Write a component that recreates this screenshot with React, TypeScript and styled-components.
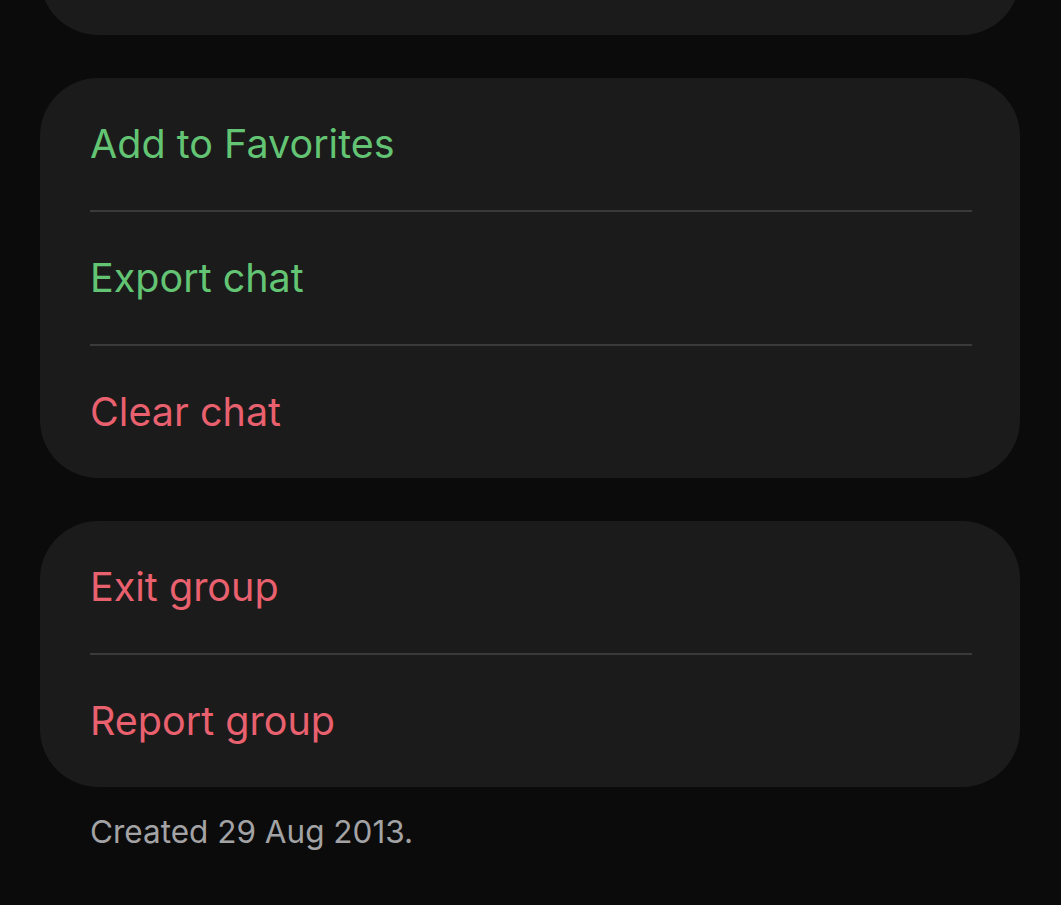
import React from 'react';
import styled, {createGlobalStyle} from "styled-components";

const GlobalStyle = createGlobalStyle`
  html, body {
    margin: 0;
    padding: 0;
    background: #0b0b0b;
  }
  body {
    font-family: Inter, "Liberation Sans", sans-serif;
    -webkit-font-smoothing: antialiased;
  }
`

type Item = { label: string, tone: "green" | "red" }

const groups: Item[][] = [
    [
        {label: "Add to Favorites", tone: "green"},
        {label: "Export chat", tone: "green"},
        {label: "Clear chat", tone: "red"},
    ],
    [
        {label: "Exit group", tone: "red"},
        {label: "Report group", tone: "red"},
    ],
]

export default function App() {
    return (
        <>
            <GlobalStyle/>
            <Page>
                <PeekCard/>
                {groups.map((group, gi) => (
                    <Card key={gi}>
                        {group.map((item, index) => (
                            <React.Fragment key={item.label}>
                                {index > 0 && <Divider/>}
                                <Row tone={item.tone}>{item.label}</Row>
                            </React.Fragment>
                        ))}
                    </Card>
                ))}
                <Footer>Created 29 Aug 2013.</Footer>
            </Page>
        </>
    );
}

const Page = styled.div`
  display: flex;
  flex-direction: column;
  gap: 43px;
  padding: 0 41px 0 40px;
  height: 905px;
  overflow: hidden;
  box-sizing: border-box;
`
const Card = styled.div`
  display: flex;
  flex-direction: column;
  background: #1b1b1b;
  border-radius: 58px;
`
const PeekCard = styled(Card)`
  height: 120px;
  margin-top: -85px;
  flex-shrink: 0;
`
const Row = styled.div<{ tone: "green" | "red" }>`
  height: 132px;
  display: flex;
  align-items: center;
  padding-left: 50px;
  font-size: 39.5px;
  color: ${p => p.tone === "green" ? "#63c574" : "#e9606e"};
`
const Divider = styled.div`
  height: 2px;
  margin: 0 48px 0 50px;
  background: #3a3a3a;
`
const Footer = styled.div`
  margin-top: -18px;
  padding-left: 50px;
  font-size: 31.5px;
  color: #a3a3a5;
`
